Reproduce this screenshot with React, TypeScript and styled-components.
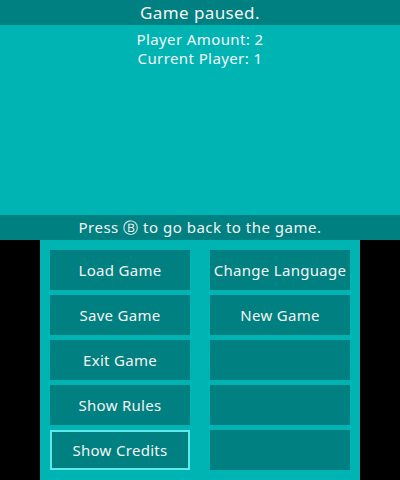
import React from "react";
import styled, { createGlobalStyle } from "styled-components";

const Global = createGlobalStyle`
  html, body { margin: 0; padding: 0; background: #000; }
  * { box-sizing: border-box; }
`;

const DARK = "#008080";
const LIGHT = "#00b4b4";

const Page = styled.div`
  width: 400px;
  height: 480px;
  display: flex;
  flex-direction: column;
  font-family: "Noto Sans", sans-serif;
  color: #f4f4f4;
`;

const TopScreen = styled.div`
  height: 240px;
  display: flex;
  flex-direction: column;
  background: ${LIGHT};
`;

const Bar = styled.div<{ $size: number; $spacing: number }>`
  height: 25px;
  background: ${DARK};
  display: flex;
  align-items: center;
  justify-content: center;
  font-size: ${(p) => p.$size}px;
  letter-spacing: ${(p) => p.$spacing}px;
`;

const Info = styled.div`
  flex: 1;
  display: flex;
  flex-direction: column;
  align-items: center;
  padding-top: 5px;
  font-size: 15px;
  line-height: 19px;
  letter-spacing: 0.4px;
`;

const BottomScreen = styled.div`
  height: 240px;
  display: flex;
  justify-content: center;
  background: #000;
`;

const Panel = styled.div`
  width: 320px;
  background: ${LIGHT};
  padding: 10px;
  display: grid;
  grid-template-columns: 140px 140px;
  grid-auto-rows: 40px;
  column-gap: 20px;
  row-gap: 5px;
`;

const Button = styled.div<{ $selected?: boolean }>`
  background: ${DARK};
  display: flex;
  align-items: center;
  justify-content: center;
  font-size: 15px;
  letter-spacing: 0.3px;
  border: ${(p) => (p.$selected ? "2px solid #5fe8e8" : "none")};
`;

const left = ["Load Game", "Save Game", "Exit Game", "Show Rules", "Show Credits"];
const right = ["Change Language", "New Game", "", "", ""];

export default function App() {
  return (
    <>
      <Global />
      <Page>
        <TopScreen>
          <Bar $size={17} $spacing={0.4}>Game paused.</Bar>
          <Info>
            <div>Player Amount: 2</div>
            <div>Current Player: 1</div>
          </Info>
          <Bar $size={15} $spacing={0.5}>Press Ⓑ to go back to the game.</Bar>
        </TopScreen>
        <BottomScreen>
          <Panel>
            {left.map((l, i) => (
              <React.Fragment key={i}>
                <Button $selected={l === "Show Credits"}>{l}</Button>
                <Button>{right[i]}</Button>
              </React.Fragment>
            ))}
          </Panel>
        </BottomScreen>
      </Page>
    </>
  );
}
